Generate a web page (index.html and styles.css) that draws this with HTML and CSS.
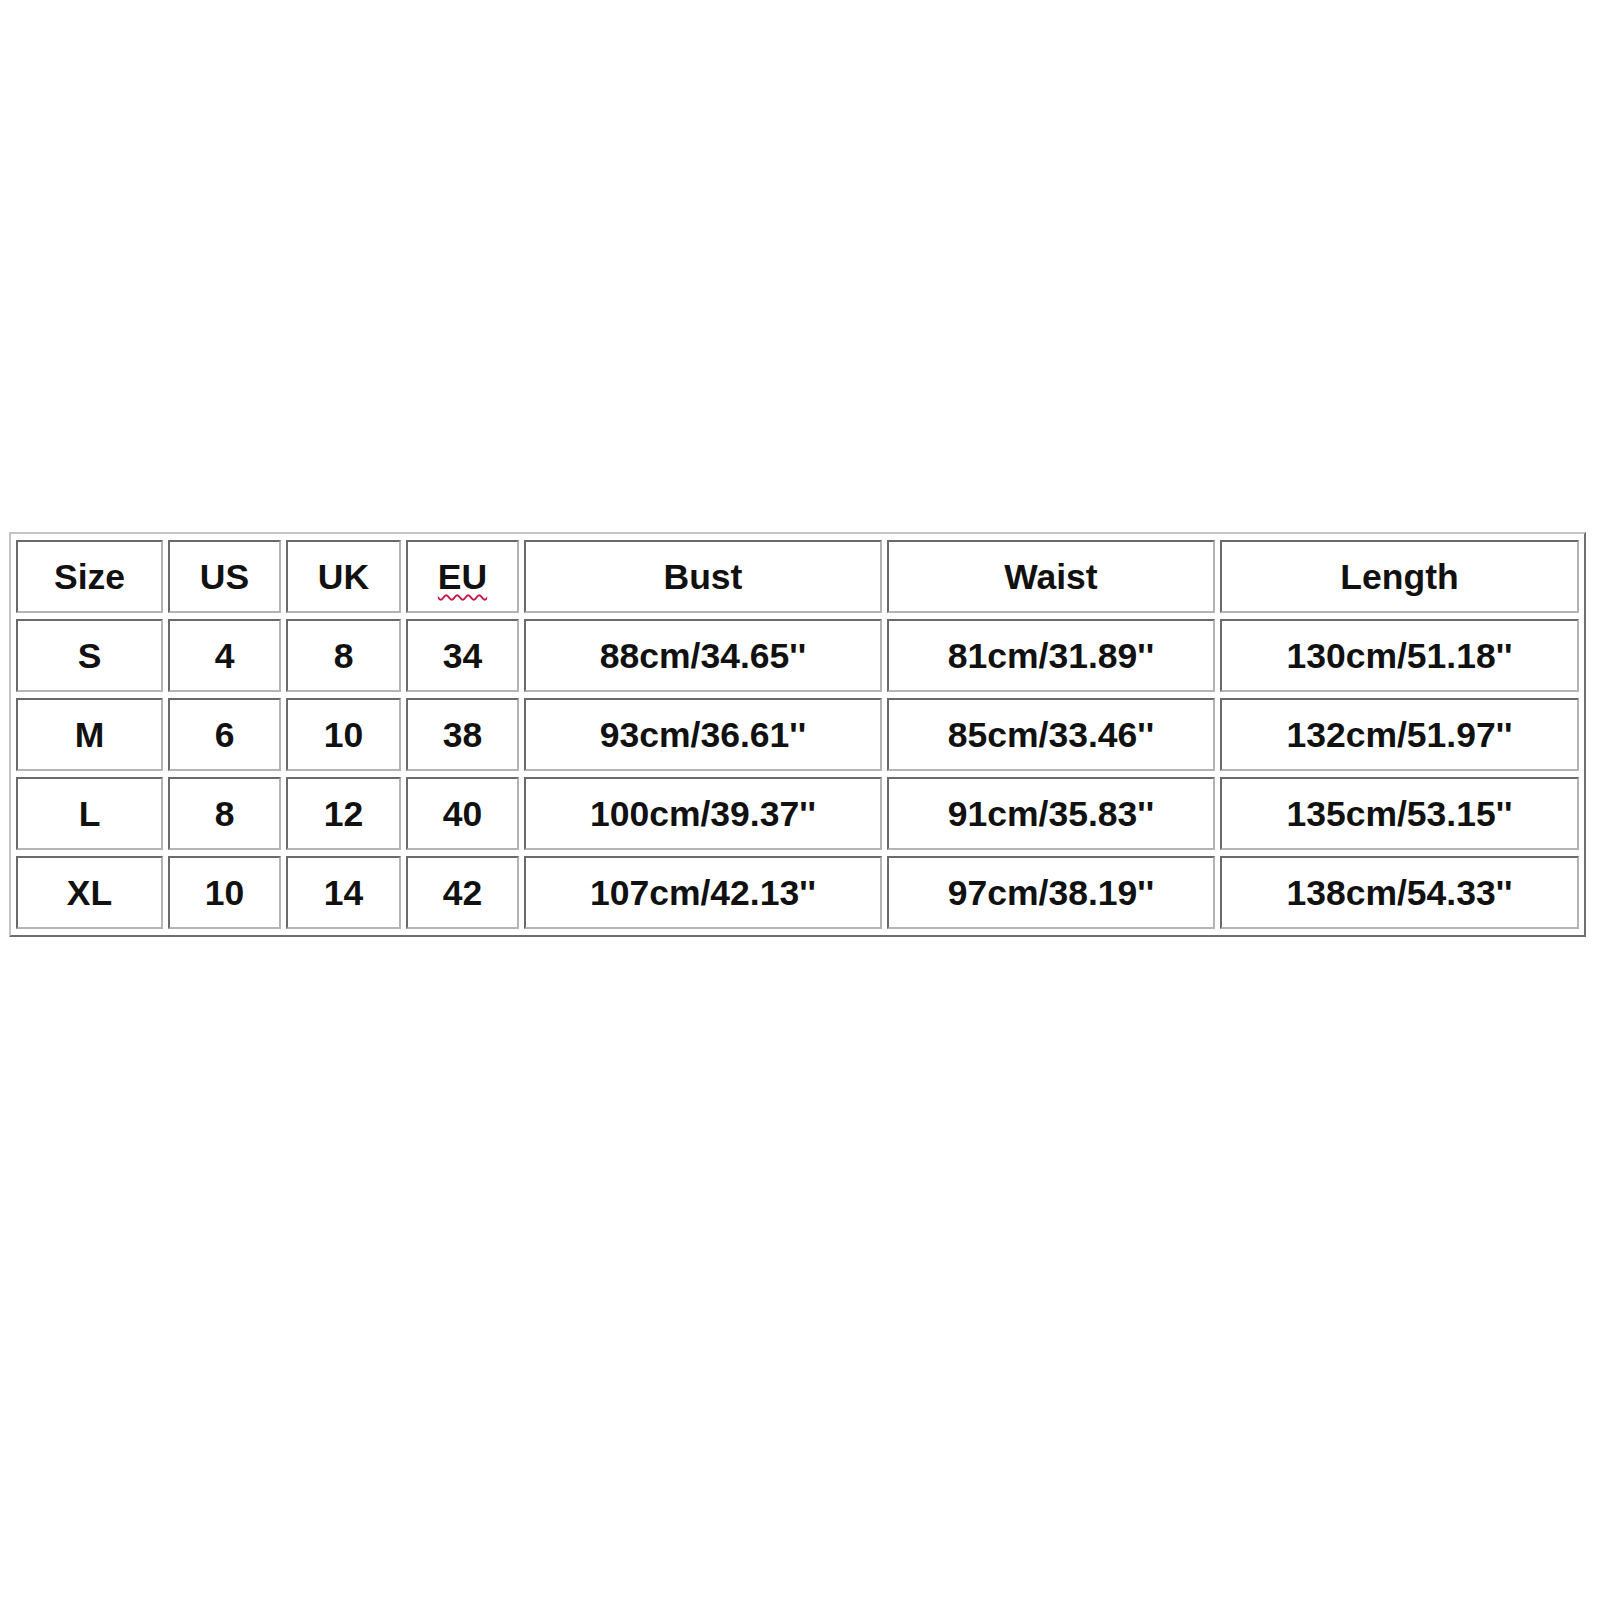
FILE: index.html
```html
<!DOCTYPE html>
<html lang="en">
<head>
<meta charset="utf-8">
<title>Size Chart</title>
<link rel="stylesheet" href="styles.css">
</head>
<body>
<div class="page">
  <div class="chart">
    <div class="cell">Size</div>
    <div class="cell">US</div>
    <div class="cell">UK</div>
    <div class="cell"><span class="typo">EU</span></div>
    <div class="cell">Bust</div>
    <div class="cell">Waist</div>
    <div class="cell">Length</div>

    <div class="cell">S</div>
    <div class="cell">4</div>
    <div class="cell">8</div>
    <div class="cell">34</div>
    <div class="cell">88cm/34.65''</div>
    <div class="cell">81cm/31.89''</div>
    <div class="cell">130cm/51.18''</div>

    <div class="cell">M</div>
    <div class="cell">6</div>
    <div class="cell">10</div>
    <div class="cell">38</div>
    <div class="cell">93cm/36.61''</div>
    <div class="cell">85cm/33.46''</div>
    <div class="cell">132cm/51.97''</div>

    <div class="cell">L</div>
    <div class="cell">8</div>
    <div class="cell">12</div>
    <div class="cell">40</div>
    <div class="cell">100cm/39.37''</div>
    <div class="cell">91cm/35.83''</div>
    <div class="cell">135cm/53.15''</div>

    <div class="cell">XL</div>
    <div class="cell">10</div>
    <div class="cell">14</div>
    <div class="cell">42</div>
    <div class="cell">107cm/42.13''</div>
    <div class="cell">97cm/38.19''</div>
    <div class="cell">138cm/54.33''</div>
  </div>
</div>
</body>
</html>
```

FILE: styles.css
```css
html, body {
  margin: 0;
  padding: 0;
  background: #ffffff;
}

.page {
  width: 1600px;
  height: 1600px;
  padding: 532px 0 0 9px;
  box-sizing: border-box;
}

.chart {
  display: inline-grid;
  grid-template-columns: 147px 113px 115px 113px 358px 328px 359px;
  grid-auto-rows: 73px;
  column-gap: 5px;
  row-gap: 6px;
  padding: 6px 5px 6px 5px;
  border-style: solid;
  border-width: 2px;
  border-color: #c4c4c4 #6e6e6e #6e6e6e #c4c4c4;
  background: #ffffff;
}

.cell {
  box-sizing: border-box;
  display: flex;
  align-items: center;
  justify-content: center;
  padding-top: 2px;
  border-style: solid;
  border-width: 2px;
  border-color: #6a6a6a #b4b4b4 #b4b4b4 #6a6a6a;
  font-family: "Liberation Sans", Arial, sans-serif;
  font-weight: bold;
  font-size: 35.5px;
  color: #111111;
  white-space: nowrap;
}

.typo {
  text-decoration-line: underline;
  text-decoration-style: wavy;
  text-decoration-color: #c8184a;
  text-decoration-thickness: 1.5px;
  text-underline-offset: 5px;
}
```
